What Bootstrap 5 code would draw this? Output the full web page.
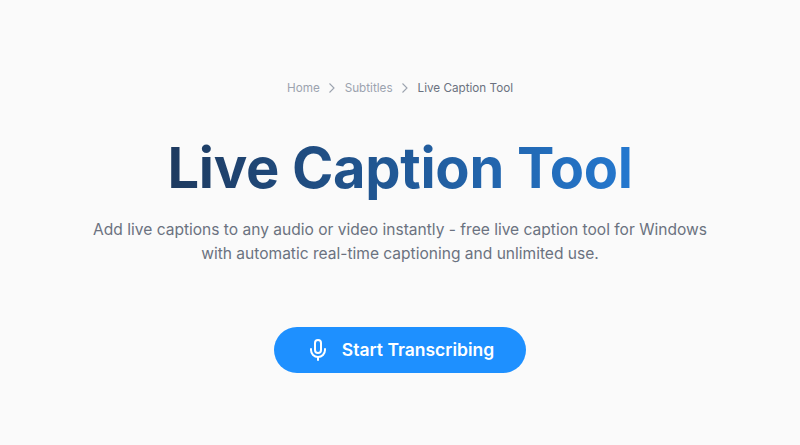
<!DOCTYPE html>
<html lang="en">
<head>
<meta charset="utf-8">
<title>Live Caption Tool</title>
<link href="https://cdn.jsdelivr.net/npm/bootstrap@5.3.0/dist/css/bootstrap.min.css" rel="stylesheet">
<style>
html,body{height:445px;overflow:hidden}
body{background:#fafafa;font-family:Inter,"Liberation Sans",sans-serif}
.hero-wrap{padding-top:80px}
.crumbs{font-size:11.7px;line-height:16px;color:#9ca3af;gap:4.5px;margin-bottom:39px}
.crumbs a{color:#9ca3af;text-decoration:none}
.crumbs .here{color:#6b7280}
.crumbs svg{width:16px;height:16px;display:block}
.hero-title{font-size:56px;line-height:67px;font-weight:700;letter-spacing:-.3px;margin:0 0 16px;
background:linear-gradient(90deg,#1e3a5f,#2478cf);-webkit-background-clip:text;background-clip:text;color:transparent;display:inline-block}
.hero-sub{font-size:15.55px;line-height:24px;color:#6b7280;width:640px;margin:0 auto 61px}
.cta{background:#1e90ff;color:#fff;border:0;border-radius:24px;width:252px;height:46px;font-size:17.5px;font-weight:600;gap:12px;padding:0}
.cta:hover{background:#1e90ff;color:#fff}
.cta svg{width:24px;height:24px}
</style>
</head>
<body>
<main class="hero-wrap text-center">
<nav class="crumbs d-flex justify-content-center align-items-center" aria-label="breadcrumb">
<a href="#">Home</a>
<svg viewBox="0 0 16 16" fill="none" stroke="#9ca3af" stroke-width="1.1"><path d="M5.5 3.5 10 8l-4.500 4.500"/></svg>
<a href="#">Subtitles</a>
<svg viewBox="0 0 16 16" fill="none" stroke="#9ca3af" stroke-width="1.1"><path d="M5.500 3.500 10 8l-4.500 4.500"/></svg>
<span class="here">Live Caption Tool</span>
</nav>
<h1 class="hero-title">Live Caption Tool</h1>
<p class="hero-sub">Add live captions to any audio or video instantly - free live caption tool for Windows with automatic real-time captioning and unlimited use.</p>
<button class="btn cta d-inline-flex align-items-center justify-content-center" type="button">
<svg viewBox="0 0 24 24" fill="none" stroke="#fff" stroke-width="2" stroke-linecap="round" stroke-linejoin="round"><path d="M12 2a3 3 0 0 0-3 3v7a3 3 0 0 0 6 0V5a3 3 0 0 0-3-3z"/><path d="M19 11v1a7 7 0 0 1-14 0v-1"/><path d="M12 19v3"/></svg>
Start Transcribing
</button>
</main>
<script src="https://cdn.jsdelivr.net/npm/bootstrap@5.3.0/dist/js/bootstrap.bundle.min.js"></script>
</body>
</html>
